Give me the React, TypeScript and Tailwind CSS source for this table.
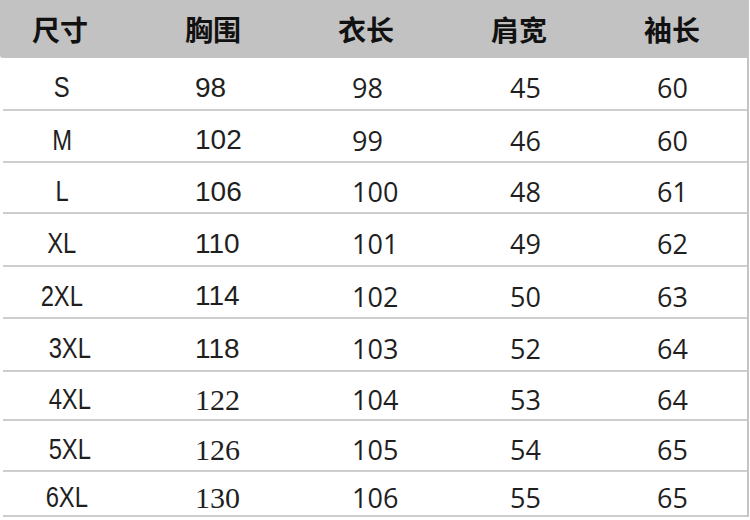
type Row = {
  size: string;
  chest: string;
  length: string;
  shoulder: string;
  sleeve: string;
  h: string;
  pad?: string;
  serif?: boolean;
};

const headers = ['尺寸', '胸围', '衣长', '肩宽', '袖长'];

const rows: Row[] = [
  { size: 'S', chest: '98', length: '98', shoulder: '45', sleeve: '60', h: 'h-[53px]' },
  { size: 'M', chest: '102', length: '99', shoulder: '46', sleeve: '60', h: 'h-[52px]' },
  { size: 'L', chest: '106', length: '100', shoulder: '48', sleeve: '61', h: 'h-[51px]' },
  { size: 'XL', chest: '110', length: '101', shoulder: '49', sleeve: '62', h: 'h-[53px]' },
  { size: '2XL', chest: '114', length: '102', shoulder: '50', sleeve: '63', h: 'h-[52px]' },
  { size: '3XL', chest: '118', length: '103', shoulder: '52', sleeve: '64', h: 'h-[53px]', pad: 'pl-[16px]' },
  { size: '4XL', chest: '122', length: '104', shoulder: '53', sleeve: '64', h: 'h-[49px]', pad: 'pl-[16px]', serif: true },
  { size: '5XL', chest: '126', length: '105', shoulder: '54', sleeve: '65', h: 'h-[51px]', pad: 'pl-[16px]', serif: true },
  { size: '6XL', chest: '130', length: '106', shoulder: '55', sleeve: '65', h: 'h-[45px]', pad: 'pl-[10px]', serif: true },
];

export default function App() {
  return (
    <div className="w-[750px] h-[520px] bg-white overflow-hidden text-[#1f1f1f]">
      <div className="w-[749px] border-r-2 border-[#c4c4c4]">
        {/* header */}
        <div className="h-[58px] bg-[#c2c2c2] flex items-center pl-[29px] gap-[91px] rounded-bl-[3px]">
          {headers.map((h) => (
            <div
              key={h}
              className="w-[62px] text-center text-[28px] font-bold leading-none font-['Noto_Sans_CJK_SC',sans-serif] text-[#111]"
            >
              {h}
            </div>
          ))}
        </div>

        {rows.map((r) => (
          <div
            key={r.size}
            className={`${r.h} border-b-2 border-[#cdcdcd] ml-[3px] grid grid-cols-[192px_157px_158px_147px_1fr] items-center pt-2`}
          >
            <div className={`${r.pad ?? ''} w-[118px] text-center leading-none`}>
              <span className="inline-block scale-x-[0.82] text-[29px] font-['Liberation_Sans',sans-serif]">
                {r.size}
              </span>
            </div>
            <div
              className={
                r.serif
                  ? "text-[30px] leading-none font-['Liberation_Serif',serif]"
                  : "text-[28px] leading-none font-['Liberation_Sans',sans-serif]"
              }
            >
              {r.chest}
            </div>
            <div className="text-[27px] leading-none font-['Open_Sans',sans-serif]">{r.length}</div>
            <div className="text-[27px] leading-none font-['Open_Sans',sans-serif]">{r.shoulder}</div>
            <div className="text-[27px] leading-none font-['Open_Sans',sans-serif]">{r.sleeve}</div>
          </div>
        ))}
      </div>
    </div>
  );
}
